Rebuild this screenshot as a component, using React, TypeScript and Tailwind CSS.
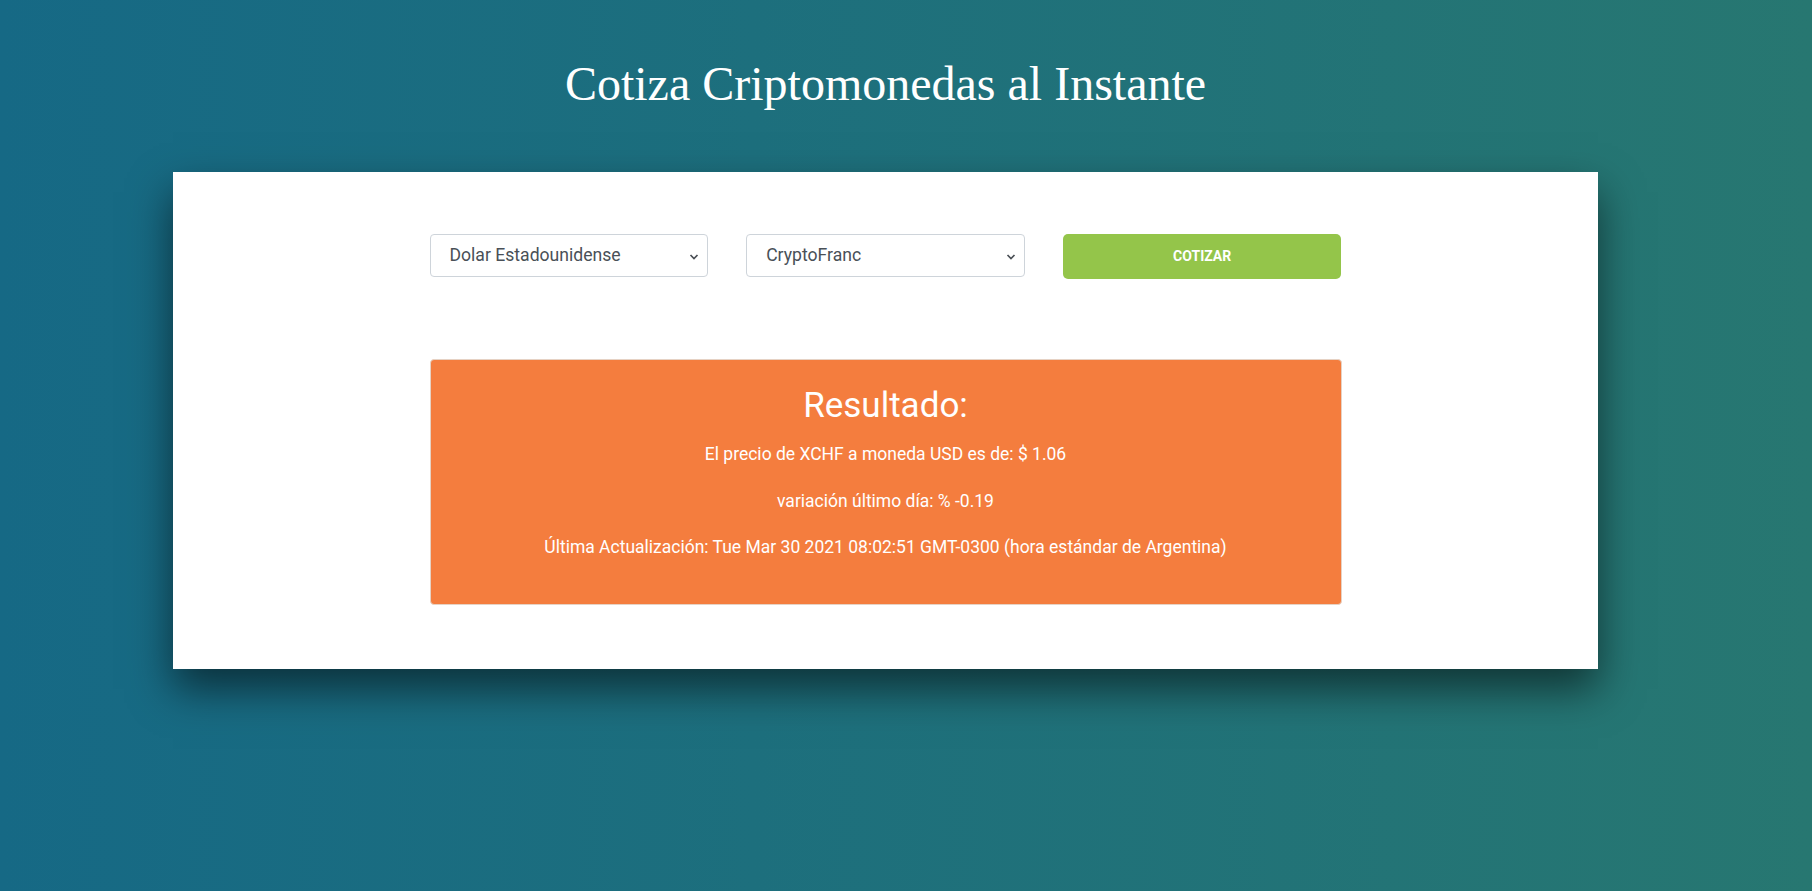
import { useState } from 'react';

const monedas = [
  { codigo: 'USD', nombre: 'Dolar Estadounidense' },
  { codigo: 'MXN', nombre: 'Peso Mexicano' },
  { codigo: 'EUR', nombre: 'Euro' },
  { codigo: 'ARS', nombre: 'Peso Argentino' },
];

const criptos = [
  { codigo: 'XCHF', nombre: 'CryptoFranc' },
  { codigo: 'BTC', nombre: 'Bitcoin' },
  { codigo: 'ETH', nombre: 'Ethereum' },
];

const Chevron = () => (
  <svg
    className="pointer-events-none absolute right-[9px] top-1/2 -translate-y-1/2"
    width="10"
    height="7"
    viewBox="0 0 10 7"
    fill="none"
  >
    <path d="M1.5 1.5l3.5 3.5 3.5-3.5" stroke="#4a4f55" strokeWidth="1.7" />
  </svg>
);

const App = () => {
  const [moneda, setMoneda] = useState('USD');
  const [cripto, setCripto] = useState('XCHF');

  return (
    <div
      className="min-h-screen w-full bg-gradient-to-r from-[#166985] to-[#277771] pt-[52px]"
      style={{ fontFamily: 'Roboto, "Liberation Sans", sans-serif' }}
    >
      <div className="ml-[173px] w-[1425px]">
        <h1
          className="text-center text-[48px] leading-[64px] text-white"
          style={{ fontFamily: '"Liberation Serif", "DejaVu Serif", serif' }}
        >
          Cotiza Criptomonedas al Instante
        </h1>

        <div className="mt-[56px] flex h-[497px] flex-col items-center bg-white pt-[62px] shadow-[0_20px_40px_rgba(0,0,0,0.55)]">
          <form className="grid w-[912px] grid-cols-3 gap-[38px]" onSubmit={(e) => e.preventDefault()}>
            <div className="relative">
              <select
                className="h-[43px] w-full appearance-none rounded border border-[#ced4da] bg-white px-[19px] text-[17.6px] text-[#495057]"
                value={moneda}
                onChange={(e) => setMoneda(e.target.value)}
              >
                {monedas.map((m) => (
                  <option key={m.codigo} value={m.codigo}>
                    {m.nombre}
                  </option>
                ))}
              </select>
              <Chevron />
            </div>
            <div className="relative">
              <select
                className="h-[43px] w-full appearance-none rounded border border-[#ced4da] bg-white px-[19px] text-[17.6px] text-[#495057]"
                value={cripto}
                onChange={(e) => setCripto(e.target.value)}
              >
                {criptos.map((c) => (
                  <option key={c.codigo} value={c.codigo}>
                    {c.nombre}
                  </option>
                ))}
              </select>
              <Chevron />
            </div>
            <button
              type="submit"
              className="h-[45px] rounded-[5px] bg-[#94c54a] text-[14px] font-bold text-white"
            >
              COTIZAR
            </button>
          </form>

          <div className="mt-[80px] flex h-[246px] w-[912px] flex-col items-center rounded border border-[#e6d2c4] bg-[#f47d3e] pt-[26px] text-white">
            <h2 className="text-[35px] leading-[40px]">Resultado:</h2>
            <p className="mt-[14px] text-[17.5px] leading-[28px]">El precio de XCHF a moneda USD es de: $ 1.06</p>
            <p className="mt-[19px] text-[17.5px] leading-[28px]">variación último día: % -0.19</p>
            <p className="mt-[18px] text-[17.5px] leading-[28px]">
              Última Actualización: Tue Mar 30 2021 08:02:51 GMT-0300 (hora estándar de Argentina)
            </p>
          </div>
        </div>
      </div>
    </div>
  );
};

export default App;
